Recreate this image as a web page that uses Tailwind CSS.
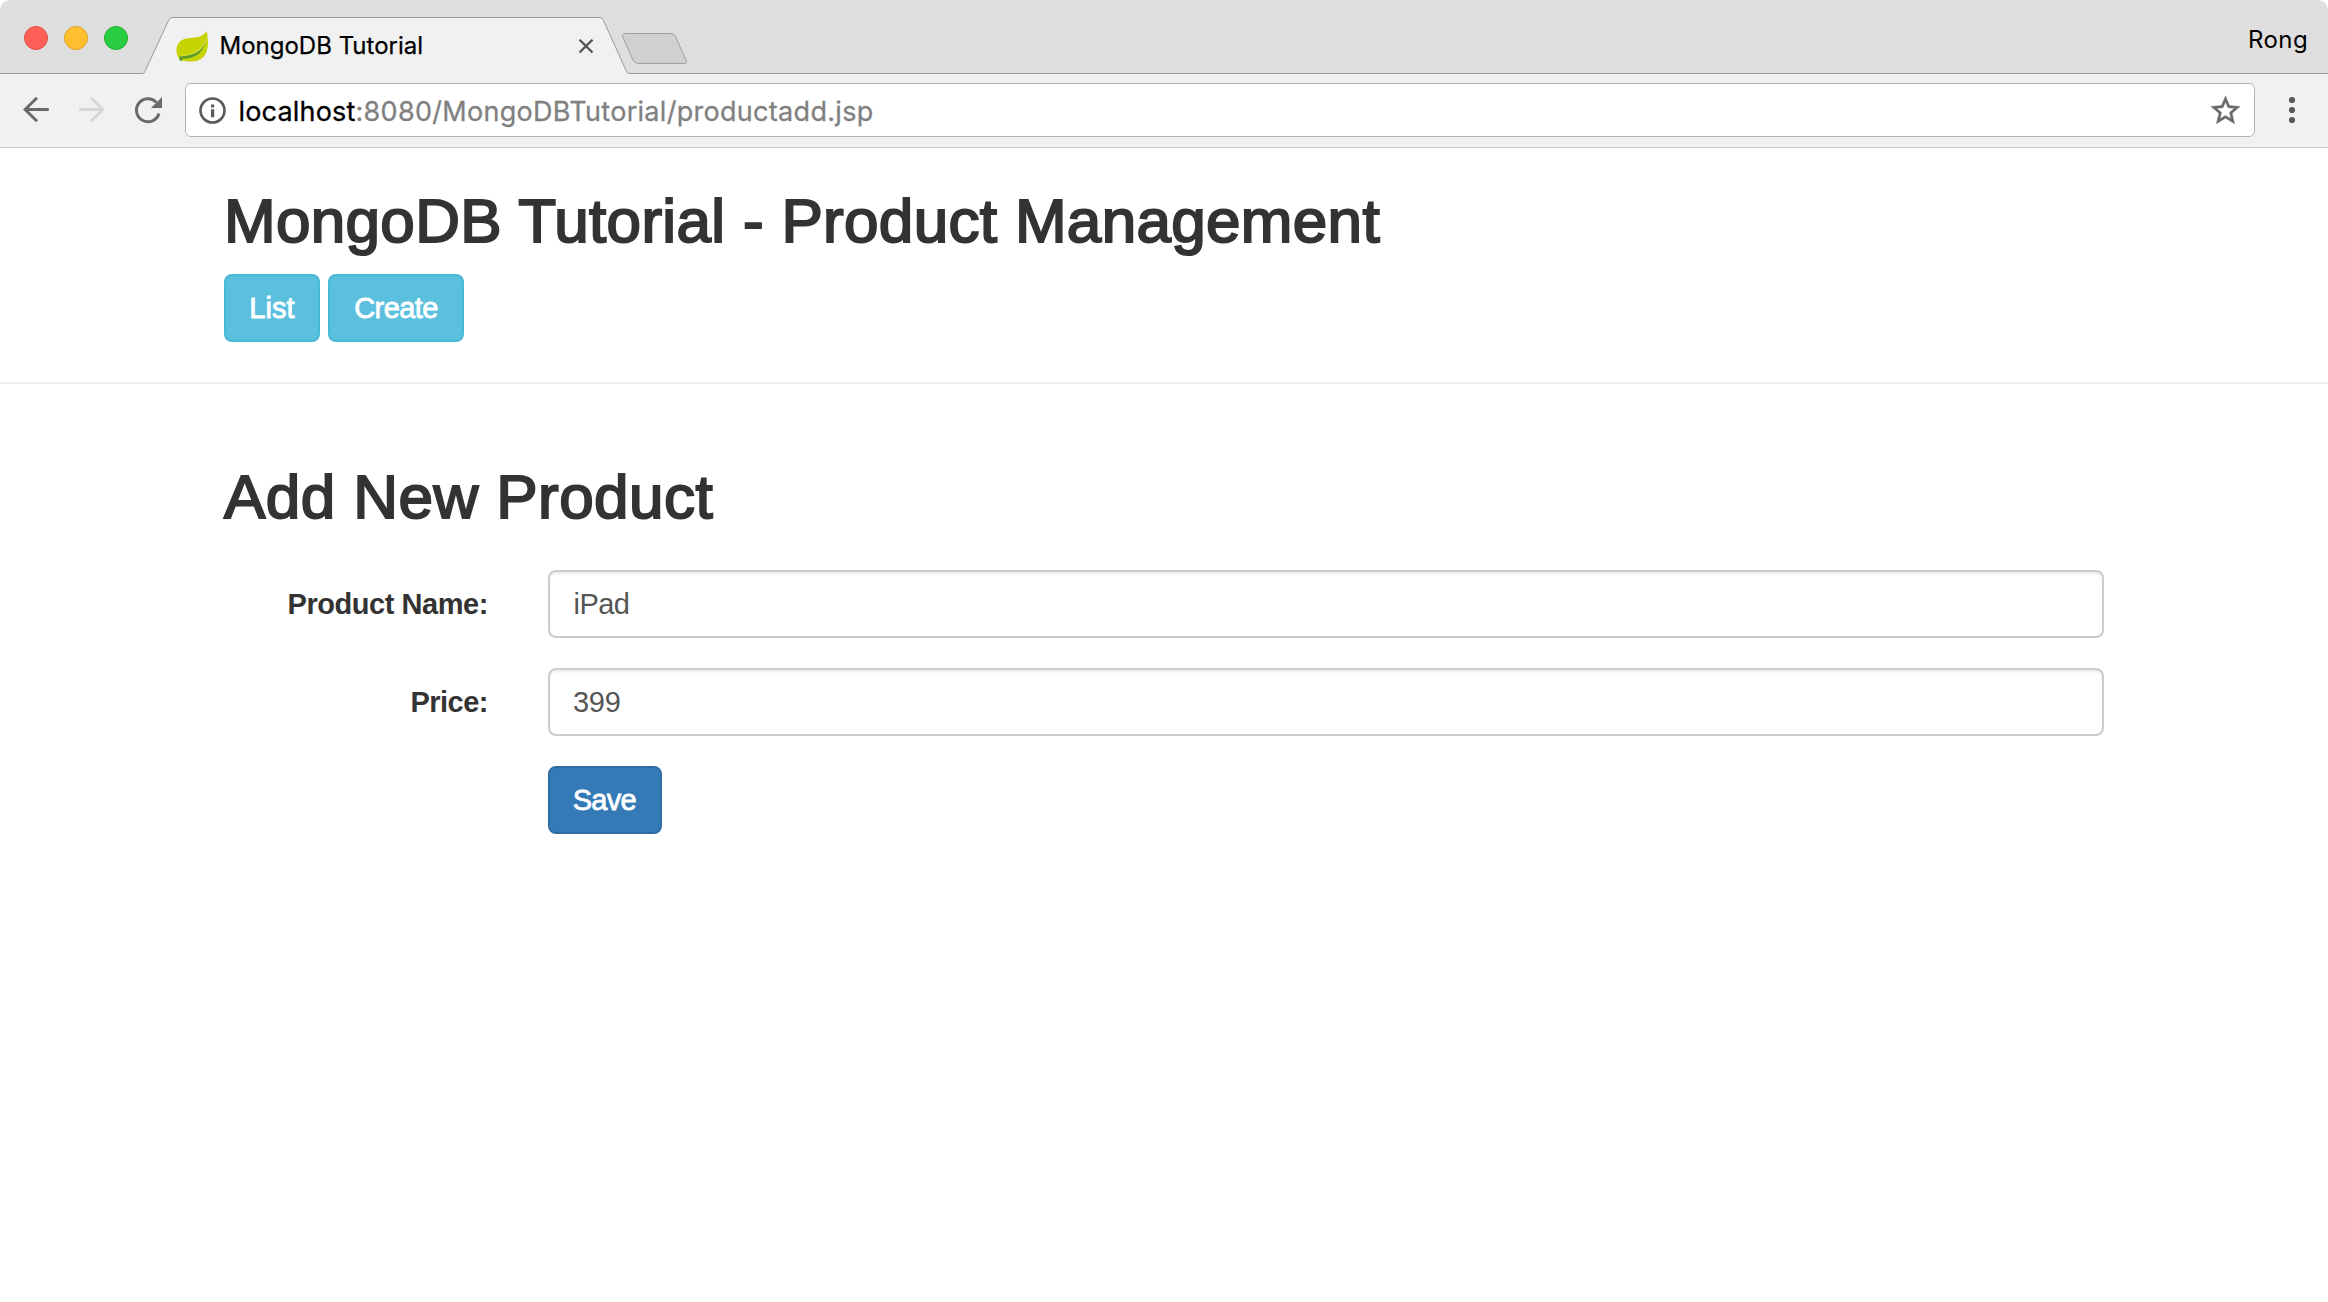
<!DOCTYPE html>
<html lang="en">
<head>
<meta charset="utf-8">
<title>MongoDB Tutorial</title>
<script src="https://cdn.jsdelivr.net/npm/@tailwindcss/browser@4"></script>
</head>
<body class="h-screen overflow-hidden bg-white font-['Liberation_Sans',Arial,sans-serif]">

<!-- Browser window -->
<header class="flex flex-col overflow-hidden rounded-t-[10px] font-[Inter,sans-serif] text-black">
  <!-- Tab strip -->
  <div class="relative flex h-[74px] items-start bg-[#dedede]">
    <svg class="absolute top-0 left-0 h-[74px] w-[2328px]" viewBox="0 0 2328 74" fill="none">
      <path d="M0 73.5H142.500Q144 73.500 145 71.500L168.500 20.500Q170 17.500 172 17.500H600Q602 17.500 603.500 20.500L626.500 71.500Q627.500 73.500 629 73.500H2328V75H0Z" fill="#f1f1f1" stroke="#9b9b9b"/>
      <path d="M625 33.500H670.500Q674 33.500 675.500 36.500L686 60Q687.500 63.500 684.500 63.500H638.500Q635 63.500 633 60L622.800 37Q621.500 33.500 625 33.500Z" fill="#d0d0d0" stroke="#9f9f9f"/>
    </svg>
    <div class="relative flex w-[176px] gap-4 pt-[26px] pl-6">
      <span class="size-6 rounded-full border border-[#e24b41] bg-[#ff6159]"></span>
      <span class="size-6 rounded-full border border-[#dfa023] bg-[#ffbf2f]"></span>
      <span class="size-6 rounded-full border border-[#1dad2b] bg-[#29ce42]"></span>
    </div>
    <div class="relative flex w-[430px] items-start">
      <svg class="mt-[30px] size-8" viewBox="0 0 32 32">
        <path d="M30.800 1C31.500 6 32.600 12 31.500 18C30 27 24 31.500 15.500 31.500C11 31.500 8 30.500 5.500 30.800C1.500 28 0 23.500 .5 18.500C1.500 11.500 7 8.500 13.500 8C21 7.600 27.500 6.500 30.800 1Z" fill="#c6d300"/>
        <path d="M31.300 7C29 16.500 22.500 24 4.500 26.500" stroke="#dbe26a" stroke-width="1.500" fill="none" opacity=".6"/>
        <path d="M29.500 11.500C27 20.500 19 25.500 3.600 26.600C3 28.500 3.300 30.500 4.500 31.200C6 31 6.500 30 6.700 28.800C20 28.500 27.500 22 29.500 11.500Z" fill="#5c9a2c"/>
      </svg>
      <span class="mt-[31px] ml-[11.500px] text-[24px] leading-[29px] whitespace-nowrap [-webkit-text-stroke:.25px_#000]">MongoDB Tutorial</span>
      <svg class="mt-[39px] mr-3 ml-auto size-4 shrink-0" viewBox="0 0 16 16" stroke="#555" stroke-width="2.300"><path d="M1.500 .7L14.500 13.500M14.500 .7L1.500 13.500"/></svg>
    </div>
    <span class="relative mt-[25px] mr-[20px] ml-auto text-[24px] leading-[29px] tracking-[.4px]">Rong</span>
  </div>
  <!-- Toolbar -->
  <div class="flex h-[74px] items-start border-b border-[#cfcfcf] bg-[#f1f1f1] pt-[9px]">
    <div class="flex h-[54px] w-[185px] items-center gap-6 pl-5">
      <svg class="size-8" viewBox="0 0 32 32" fill="none" stroke="#6a6a6a" stroke-width="3"><path d="M28.800 15.500H5M17 3.800L5.200 15.500L17 27.200"/></svg>
      <svg class="size-8" viewBox="0 0 32 32" fill="none" stroke="#d6d6d6" stroke-width="3"><path d="M3.200 15.500H27M15 3.800L26.800 15.500L15 27.200"/></svg>
      <svg class="size-8" viewBox="0 0 32 32" fill="none" stroke="#6a6a6a" stroke-width="3"><path d="M24.300 8.300A11.500 11.500 0 1 0 27 19.500"/><path d="M30 3V14H19Z" fill="#6a6a6a" stroke="none"/></svg>
    </div>
    <div class="flex h-[54px] w-[2070px] items-center rounded-[6px] border border-[#b3b3b3] bg-white pl-[11px]">
      <svg class="size-8" viewBox="0 0 32 32" fill="none"><circle cx="15.500" cy="16.500" r="12" stroke="#5a5a5a" stroke-width="2.600"/><path d="M14 10.500h3.200v3H14zM14 15.200h3.200v8H14z" fill="#5a5a5a"/></svg>
      <span class="mt-[2px] ml-[9.500px] text-[27px] leading-[33px] tracking-[.3px] whitespace-nowrap text-[#808080] [-webkit-text-stroke:.3px]"><span class="tracking-[.18px] text-black">localhost</span>:8080/MongoDBTutorial/productadd.jsp</span>
      <svg class="mt-px mr-[11px] ml-auto size-[35px]" viewBox="0 0 24 24" fill="#6a6a6a" stroke="#6a6a6a" stroke-width=".3"><path d="M22 9.240l-7.190-.62L12 2 9.190 8.630 2 9.240l5.460 4.730L5.820 21 12 17.270 18.180 21l-1.630-7.030L22 9.240zM12 15.400l-3.760 2.270 1-4.280-3.320-2.880 4.380-.38L12 6.100l1.710 4.040 4.380.38-3.320 2.880 1 4.280L12 15.400z"/></svg>
    </div>
    <svg class="ml-[31px] h-[54px] w-3" viewBox="0 0 12 54" fill="#5a5a5a"><circle cx="6" cy="17" r="3.100"/><circle cx="6" cy="27" r="3.100"/><circle cx="6" cy="37" r="3.100"/></svg>
  </div>
</header>

<!-- Page header -->
<section class="border-b-2 border-[#eee] px-[224px] pt-10 pb-10">
  <h1 class="text-[62px] leading-[65px] tracking-[.32px] whitespace-nowrap text-[#333] [-webkit-text-stroke:2px_#333]">MongoDB Tutorial - Product Management</h1>
  <div class="mt-[21px] flex gap-2">
    <button class="h-[68px] w-24 rounded-lg border-2 border-[#46b8da] bg-[#5bc0de] text-[29px] leading-[32px] tracking-[.1px] text-white [-webkit-text-stroke:.8px_#fff]">List</button>
    <button class="h-[68px] w-[136px] rounded-lg border-2 border-[#46b8da] bg-[#5bc0de] text-[29px] leading-[32px] tracking-[-.55px] text-white [-webkit-text-stroke:.8px_#fff]">Create</button>
  </div>
</section>

<!-- Product form -->
<main class="px-[224px] pt-20">
  <h2 class="text-[62px] leading-[65px] tracking-[.44px] whitespace-nowrap text-[#333] [-webkit-text-stroke:2px_#333]">Add New Product</h2>
  <form class="mt-[41px] grid grid-cols-[264px_1556px] gap-x-[60px] gap-y-[30px] text-[29px]">
    <label class="self-center text-right leading-[32px] font-bold tracking-[-.45px] text-[#333]">Product Name:</label>
    <input class="h-[68px] rounded-lg border-2 border-[#ccc] px-[23.500px] leading-[32px] tracking-[-.55px] text-[#555] shadow-[inset_0_2px_2px_rgba(0,0,0,.075)]" value="iPad">
    <label class="self-center text-right leading-[32px] font-bold tracking-[-.5px] text-[#333]">Price:</label>
    <input class="h-[68px] rounded-lg border-2 border-[#ccc] px-[23px] leading-[32px] tracking-[-.3px] text-[#555] shadow-[inset_0_2px_2px_rgba(0,0,0,.075)]" value="399">
    <button class="col-start-2 h-[68px] w-[114px] rounded-lg border-2 border-[#2e6da4] bg-[#337ab7] pr-[1.500px] leading-[32px] tracking-[-.75px] text-white [-webkit-text-stroke:.8px_#fff]">Save</button>
  </form>
</main>
</body>
</html>
